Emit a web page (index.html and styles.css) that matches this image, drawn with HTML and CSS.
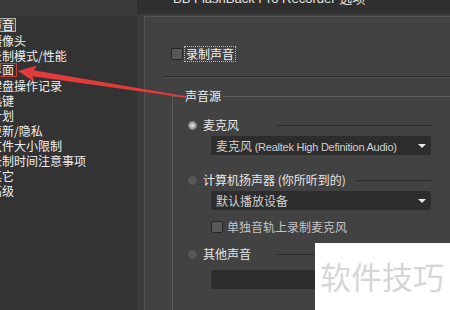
FILE: index.html
```html
<!DOCTYPE html>
<html>
<head>
    <meta charset="utf-8">
    <meta name="viewport" content="width=device-width, initial-scale=1">
    <link rel="stylesheet" href="styles.css">
</head>
<body>
    <div class="window">
        <div class="top">
            <div class="top-left"></div>
            <div class="titlebar"><span class="title">BB FlashBack Pro Recorder 选项</span></div>
        </div>
        <div class="main">
            <ul class="nav">
                <li><span class="sel">声音</span></li>
                <li>摄像头</li>
                <li>录制模式/性能</li>
                <li><span class="mark">界面</span></li>
                <li>键盘操作记录</li>
                <li>热键</li>
                <li>计划</li>
                <li>更新/隐私</li>
                <li>文件大小限制</li>
                <li>录制时间注意事项</li>
                <li>其它</li>
                <li>高级</li>
            </ul>
            <div class="gutter"></div>
            <div class="panel">
                <div class="check-row">
                    <span class="box"></span><span class="focus">录制声音</span>
                </div>
                <div class="sep"></div>
                <div class="group">
                    <div class="group-title">声音源</div>
                    <div class="group-body">
                        <div class="opt first">
                            <span class="radio on"></span><span class="opt-label short">麦克风</span><span class="rule"></span>
                        </div>
                        <div class="select">
                            <span>麦克风 <span class="latin">(Realtek High Definition Audio)</span></span><span class="caret"></span>
                        </div>
                        <div class="opt second">
                            <span class="radio"></span><span class="opt-label">计算机扬声器 (你所听到的)</span><span class="rule"></span>
                        </div>
                        <div class="select">
                            <span>默认播放设备</span><span class="caret"></span>
                        </div>
                        <div class="check-row sub">
                            <span class="box"></span><span class="sub-label">单独音轨上录制麦克风</span>
                        </div>
                        <div class="opt third">
                            <span class="radio"></span><span class="opt-label short">其他声音</span><span class="rule"></span>
                        </div>
                        <div class="select last"></div>
                    </div>
                </div>
            </div>
        </div>

        <!-- annotation arrow -->
        <svg class="arrow" width="450" height="310" viewBox="0 0 450 310">
            <polygon points="18,71 37,65.5 33.5,70.3 186.1,96.3 185.9,97.7 32.5,76.3 34.6,82" fill="#e33a3a"/>
        </svg>

        <div class="watermark">软件技巧</div>
    </div>
</body>
</html>
```

FILE: styles.css
```css
body {
    margin: 0;
    background-color: #3a3a3a;
    font-family: "Noto Sans CJK SC", sans-serif;
    color: #ececec;
}

.window {
    position: relative;
    width: 450px;
    height: 310px;
    overflow: hidden;
}

/* top strip */
.top {
    display: flex;
    height: 16px;
}

.top-left {
    flex-shrink: 0;
    width: 137px;
    background-color: #3b3b3b;
}

.titlebar {
    flex: 1;
    min-width: 0;
    height: 14px;
    padding-left: 36px;
    background-color: #2f2f2f;
    border-bottom: 2px solid #3d3d3d;
    overflow: hidden;
}

.title {
    display: block;
    margin-top: -8px;
    font-family: "Liberation Sans", "Noto Sans CJK SC", sans-serif;
    font-size: 13px;
    line-height: 13px;
    color: #e4e4e4;
    white-space: nowrap;
}

.main {
    display: flex;
    height: 294px;
}

/* left list */
.nav {
    flex-shrink: 0;
    width: 137px;
    margin: 0;
    padding: 2px 0 0 0;
    list-style: none;
    background-color: #333;
    font-size: 12px;
    line-height: 15px;
    color: #eee;
    overflow: hidden;
}

.nav li {
    height: 15px;
    margin-left: -10px;
    white-space: nowrap;
}

.nav .sel,
.nav .mark {
    display: inline-block;
    vertical-align: top;
    margin-left: -2px;
    padding: 0 1px;
    line-height: 12px;
    border: 1px solid #b4b4b4;
}

.nav .sel {
    background-color: #4a4a4a;
    color: #fff;
}

.nav .mark {
    padding-right: 2px;
    border-color: #d23a3a;
}

.gutter {
    flex-shrink: 0;
    width: 7px;
    background-color: #3b3b3b;
}

/* right panel */
.panel {
    flex: 1;
    min-width: 0;
    padding-top: 29px;
    background-color: #424242;
    border-top: 1px solid #555;
    border-left: 1px solid #525252;
    font-size: 12px;
}

.check-row {
    display: flex;
    align-items: center;
    height: 16px;
}

.box {
    flex-shrink: 0;
    width: 10px;
    height: 10px;
    margin-left: 26px;
    background-color: #585858;
    border: 1px solid #262626;
    border-radius: 2px;
}

.focus {
    margin-left: 1px;
    padding: 0 1px;
    line-height: 14px;
    border: 1px dotted #b8b8b8;
    color: #f2f2f2;
}

.sep {
    margin: 14px 0 0 18px;
    border-top: 1px solid #2e2e2e;
    border-bottom: 1px solid #4b4b4b;
}

.group {
    width: 300px;
    height: 260px;
    margin: 18px 0 0 27px;
    border-top: 1px solid #5d5d5d;
    border-left: 1px solid #5a5a5a;
}

.group-title {
    width: fit-content;
    margin: -9px 0 0 10px;
    padding: 0 2px;
    line-height: 15px;
    background-color: #424242;
    color: #ececec;
}

.group-body {
    width: 258px;
}

.opt {
    display: flex;
    align-items: center;
    height: 14px;
}

.opt.first {
    margin-top: 15px;
}

.opt.second {
    margin-top: 18px;
}

.opt.third {
    margin-top: 13px;
}

.radio {
    flex-shrink: 0;
    width: 11px;
    height: 11px;
    margin-left: 14px;
    border-radius: 50%;
    background-color: #575757;
    box-shadow: inset 0 0 0 1px #3c3c3c;
}

.radio.on {
    background: radial-gradient(circle, #ececec 0, #bcbcbc 25%, #6c6c6c 65%, #505050 100%);
}

.opt-label {
    margin-left: 5px;
    line-height: 14px;
    color: #e6e6e6;
    white-space: nowrap;
}

.opt-label.short {
    min-width: 64px;
}

.rule {
    flex: 1;
    margin-left: 10px;
    border-top: 1px solid #2b2b2b;
}

.select {
    display: flex;
    align-items: center;
    width: 215px;
    height: 19px;
    margin: 4px 0 0 38px;
    padding-left: 5px;
    background-color: #2d2d2d;
    border-radius: 2px;
    color: #cfcfcf;
    white-space: nowrap;
}

.select .latin {
    font-family: "Liberation Sans", sans-serif;
    font-size: 11px;
    letter-spacing: -0.25px;
}

.select.last {
    margin-top: 9px;
}

.caret {
    margin-left: auto;
    margin-right: 5px;
    border-left: 4px solid transparent;
    border-right: 4px solid transparent;
    border-top: 4px solid #e6e6e6;
}

.check-row.sub {
    height: 14px;
    margin-top: 10px;
}

.check-row.sub .box {
    margin-left: 38px;
}

.sub-label {
    margin-left: 4px;
    line-height: 14px;
    color: #c4c4c4;
}

/* overlays */
.arrow {
    position: absolute;
    top: 0;
    left: 0;
    pointer-events: none;
}

.watermark {
    position: absolute;
    left: 315px;
    top: 243px;
    width: 130px;
    height: 54px;
    padding: 13px 0 0 5px;
    background-color: #fff;
    color: #d6d6d6;
    font-size: 31px;
    line-height: 40px;
    white-space: nowrap;
}
```
